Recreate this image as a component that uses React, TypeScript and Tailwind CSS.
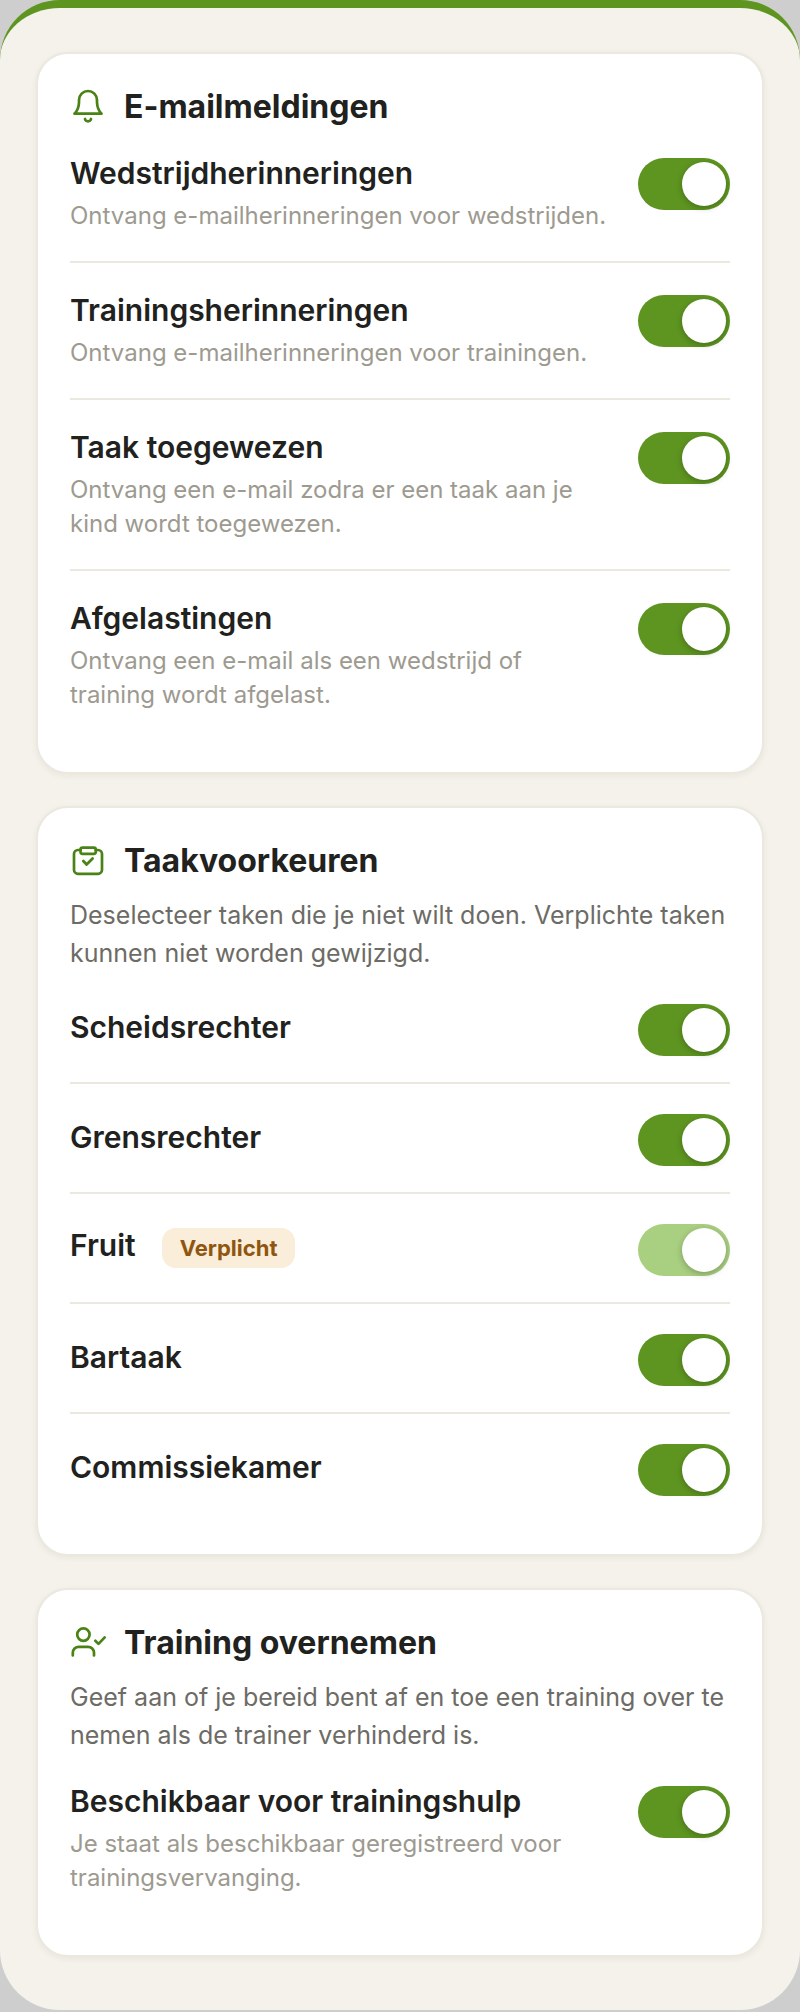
import { useState, type ReactNode } from "react";

function LineIcon({ children }: { children: ReactNode }) {
  return (
    <svg
      aria-hidden="true"
      className="h-9 w-9 shrink-0 overflow-visible text-[#4a8215]"
      viewBox="0 0 36 36"
      fill="none"
      stroke="currentColor"
      strokeWidth="2.7"
      strokeLinecap="round"
      strokeLinejoin="round"
    >
      {children}
    </svg>
  );
}

function BellIcon() {
  return (
    <LineIcon>
      <path d="M4.500 24.700C7.500 21.600 8.900 18 9 13.500V11a9 9 0 0 1 18 0v2.500C27.200 18 28.500 21.600 31.500 24.700Z" />
      <path d="M15 30a3.100 3.100 0 0 0 6 0" />
    </LineIcon>
  );
}

function ClipboardIcon() {
  return (
    <LineIcon>
      <path d="M10.500 7H8a4 4 0 0 0-4 4v15.800a4 4 0 0 0 4 4h20a4 4 0 0 0 4-4V11a4 4 0 0 0-4-4h-2.300" />
      <rect x="10.500" y="4.600" width="15.300" height="6.200" rx="2" />
      <path d="m13.300 18 3.300 3.500 6-6" />
    </LineIcon>
  );
}

function UserCheckIcon() {
  return (
    <LineIcon>
      <circle cx="13.400" cy="9.600" r="6.200" />
      <path d="M2.800 30.500v-2.700a6 6 0 0 1 6-6h9.200a6 6 0 0 1 6 6v2.700" />
      <path d="m25.300 15.700 3.200 3.200 6.200-6.500" />
    </LineIcon>
  );
}

interface SettingProps {
  id: string;
  title: string;
  description?: string;
  badge?: string;
  locked?: boolean;
}

function Setting({ id, title, description, badge, locked = false }: SettingProps) {
  const [on, setOn] = useState(true);
  const padding = description ? "py-7" : "py-[26px]";
  const textPadding = description ? "" : "pb-[2px]";
  return (
    <li className={`flex items-start justify-between gap-7 border-b-2 border-[#ebe8df] first:pt-0 last:border-b-0 ${padding}`}>
      <div className={`min-w-0 self-center ${textPadding}`}>
        <div className="flex items-baseline gap-[26px]">
          <label htmlFor={id} className="text-[30px] leading-[39px] font-semibold">{title}</label>
          {badge && (
            <span className="rounded-[14px] bg-[#faedda] px-[18px] text-[22px] leading-10 font-bold text-[#8f5610]">{badge}</span>
          )}
        </div>
        {description && <p className="mt-[6px] text-[24px] leading-[34px] text-[#9d9a90]">{description}</p>}
      </div>
      <input
        id={id}
        type="checkbox"
        role="switch"
        checked={on}
        disabled={locked}
        onChange={(event) => setOn(event.target.checked)}
        className="mt-1 h-[52px] w-[92px] shrink-0 appearance-none rounded-full bg-[#cfccc2] p-1 before:block before:h-11 before:w-11 before:rounded-full before:bg-white before:shadow-[0_2px_6px_rgba(0,0,0,0.25)] before:content-[''] checked:bg-[#5e9521] checked:before:translate-x-10 disabled:checked:bg-[#a9cf80]"
      />
    </li>
  );
}

interface CardProps {
  icon: ReactNode;
  title: string;
  intro?: string;
  children: ReactNode;
}

function Card({ icon, title, intro, children }: CardProps) {
  return (
    <section className="rounded-[32px] border-2 border-[#ebe8df] bg-white p-8 shadow-[0_2px_6px_rgba(30,30,20,0.06)]">
      <h2 className="flex items-center gap-[18px] text-[32px] leading-[42px] font-bold">
        {icon}
        {title}
      </h2>
      {intro && <p className="mt-[14px] text-[25px] leading-[38px] text-[#6d6b65]">{intro}</p>}
      <ul className={intro ? "mt-7" : "mt-[26px]"}>{children}</ul>
    </section>
  );
}

export default function App() {
  return (
    <div className="flex min-h-screen flex-col bg-[#cecece] pb-[2px] font-['Inter',sans-serif] text-[#21211e]">
      <main className="flex flex-1 flex-col gap-8 rounded-[60px] border-t-8 border-[#5e9521] bg-[#f5f2eb] px-9 pt-11 pb-[52px]">
        <Card icon={<BellIcon />} title="E-mailmeldingen">
          <Setting id="wedstrijd" title="Wedstrijdherinneringen" description="Ontvang e-mailherinneringen voor wedstrijden." />
          <Setting id="training" title="Trainingsherinneringen" description="Ontvang e-mailherinneringen voor trainingen." />
          <Setting id="taak" title="Taak toegewezen" description="Ontvang een e-mail zodra er een taak aan je kind wordt toegewezen." />
          <Setting id="afgelasting" title="Afgelastingen" description="Ontvang een e-mail als een wedstrijd of training wordt afgelast." />
        </Card>
        <Card icon={<ClipboardIcon />} title="Taakvoorkeuren" intro="Deselecteer taken die je niet wilt doen. Verplichte taken kunnen niet worden gewijzigd.">
          <Setting id="scheidsrechter" title="Scheidsrechter" />
          <Setting id="grensrechter" title="Grensrechter" />
          <Setting id="fruit" title="Fruit" badge="Verplicht" locked />
          <Setting id="bartaak" title="Bartaak" />
          <Setting id="commissiekamer" title="Commissiekamer" />
        </Card>
        <Card icon={<UserCheckIcon />} title="Training overnemen" intro="Geef aan of je bereid bent af en toe een training over te nemen als de trainer verhinderd is.">
          <Setting id="trainingshulp" title="Beschikbaar voor trainingshulp" description="Je staat als beschikbaar geregistreerd voor trainingsvervanging." />
        </Card>
      </main>
    </div>
  );
}
